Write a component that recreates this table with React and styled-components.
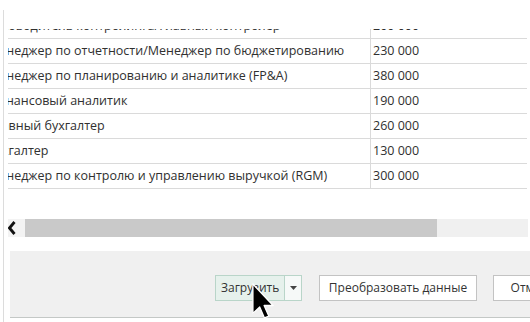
import styled, { createGlobalStyle } from "styled-components";

const GlobalStyle = createGlobalStyle`
  html, body {
    margin: 0;
    padding: 0;
    background: #ffffff;
  }
  body {
    font-family: "Open Sans", "Noto Sans", "DejaVu Sans", sans-serif;
    color: #303030;
  }
`;

const rows = [
  { name: "Руководитель контролинга/Главный контролер", salary: "200 000" },
  { name: "Менеджер по отчетности/Менеджер по бюджетированию", salary: "230 000" },
  { name: "Менеджер по планированию и аналитике (FP&A)", salary: "380 000" },
  { name: "Финансовый аналитик", salary: "190 000" },
  { name: "Главный бухгалтер", salary: "260 000" },
  { name: "Бухгалтер", salary: "130 000" },
  { name: "Менеджер по контролю и управлению выручкой (RGM)", salary: "300 000" },
];

export default function App() {
  return (
    <>
      <GlobalStyle />
      <Window>
        <Frame>
          <TableViewport>
            <Table>
              {rows.map((r) => (
                <Row key={r.name}>
                  <NameCell>
                    <span>{r.name}</span>
                  </NameCell>
                  <ValueCell>{r.salary}</ValueCell>
                </Row>
              ))}
            </Table>
          </TableViewport>

          <Scrollbar>
            <ScrollArrow>
              <svg width="9" height="14" viewBox="0 0 9 14">
                <polyline points="6.5,1 1.5,7 6.5,13" fill="none" stroke="#111" strokeWidth="2.8" />
              </svg>
            </ScrollArrow>
            <Thumb />
            <Track />
          </Scrollbar>

          <Footer>
            <SplitButton>
              <MainPart>Загрузить</MainPart>
              <DropPart>
                <svg width="7" height="4" viewBox="0 0 7 4">
                  <polygon points="0,0 7,0 3.5,4" fill="#444" />
                </svg>
              </DropPart>
            </SplitButton>
            <Button $width={158}>Преобразовать данные</Button>
            <Button $width={80}>Отмена</Button>
          </Footer>
        </Frame>

        <Cursor width="22" height="36" viewBox="0 0 12 19.5">
          <path
            d="M0.5 0.5 L0.5 16.5 L4.2 13 L6.8 19 L9.2 18 L6.6 12.2 L11.5 12.2 Z"
            fill="#000"
            stroke="#fff"
            strokeWidth="0.7"
            strokeLinejoin="round"
          />
        </Cursor>
      </Window>
    </>
  );
}

const Window = styled.div`
  position: relative;
  width: 530px;
  height: 322px;
  overflow: hidden;
  background: #fff;
`;

const Frame = styled.div`
  margin: 10px 0 0 3px;
  height: 312px;
  border-left: 1px solid #dcdcdc;
  display: flex;
  flex-direction: column;
`;

const TableViewport = styled.div`
  margin: 19px 0 0 4px;
  width: 519px;
  height: 161px;
  overflow: hidden;
  flex: none;
`;

const Table = styled.div`
  margin-top: -15px;
  display: flex;
  flex-direction: column;
`;

const Row = styled.div`
  display: grid;
  grid-template-columns: 362px 1fr;
  height: 25px;
  box-sizing: border-box;
  border-bottom: 1px solid #dadada;
  font-size: 12.5px;
  line-height: 24px;
`;

const NameCell = styled.div`
  overflow: hidden;
  white-space: nowrap;
  span {
    display: inline-block;
    margin-left: -20px;
  }
`;

const ValueCell = styled.div`
  border-left: 1px solid #dadada;
  padding-left: 2px;
  white-space: nowrap;
`;

const Scrollbar = styled.div`
  margin: 29px 0 0 4px;
  width: 520px;
  height: 18px;
  display: flex;
  flex: none;
`;

const ScrollArrow = styled.div`
  width: 17px;
  background: #f3f3f3;
  display: flex;
  align-items: center;
  justify-content: flex-start;
  svg {
    margin-left: 0;
  }
`;

const Thumb = styled.div`
  width: 412px;
  background: #c9c9c9;
`;

const Track = styled.div`
  flex: 1;
  background: #f0f0f0;
`;

const Footer = styled.div`
  margin: 14px 0 0 6px;
  height: 67px;
  background: #f0f0f0;
  border-bottom: 1px solid #c4c8c6;
  display: flex;
  align-items: flex-start;
  gap: 16px;
  padding: 24px 0 0 205px;
  box-sizing: border-box;
  flex: none;
  width: 540px;
`;

const SplitButton = styled.div`
  display: flex;
  height: 26px;
  border: 1px solid #b9d5c9;
  box-sizing: border-box;
  margin-right: 1px;
`;

const MainPart = styled.div`
  width: 69px;
  background: #e6f1ec;
  border-right: 1px solid #b9d5c9;
  font-size: 12px;
  line-height: 24px;
  padding-left: 5px;
  box-sizing: border-box;
  color: #333;
`;

const DropPart = styled.div`
  width: 16px;
  background: #f6f9f8;
  display: flex;
  align-items: center;
  justify-content: center;
`;

const Button = styled.div`
  flex: none;
  width: ${(p) => p.$width}px;
  height: 26px;
  box-sizing: border-box;
  border: 1px solid #c3c3c3;
  background: #fff;
  font-size: 12px;
  line-height: 24px;
  text-align: center;
  color: #333;
  white-space: nowrap;
`;

const Cursor = styled.svg`
  position: absolute;
  left: 252px;
  top: 283px;
`;
